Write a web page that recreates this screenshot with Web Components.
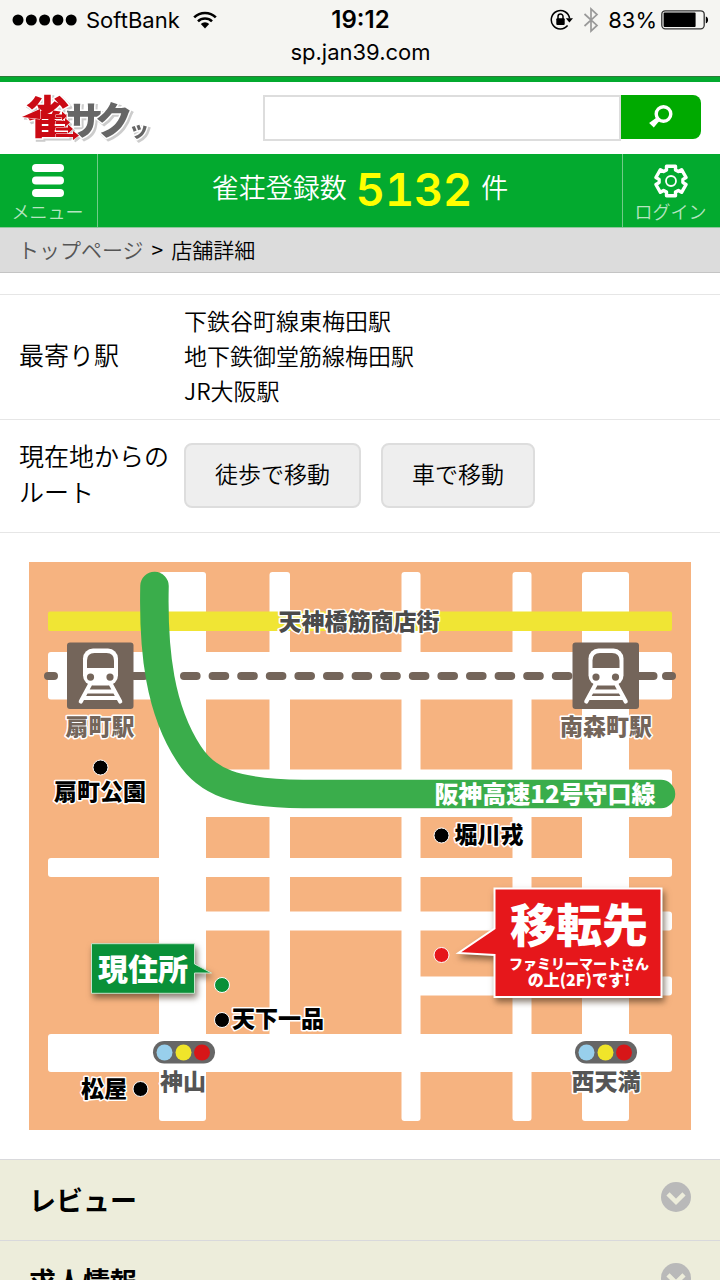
<!DOCTYPE html>
<html lang="ja">
<head>
<meta charset="utf-8">
<meta name="viewport" content="width=device-width, initial-scale=1">
<title>雀サクッ | 店舗詳細</title>
<style>
  body {
    margin: 0;
    background: #fff;
    color: #000;
    font-family: "Noto Sans CJK JP", sans-serif;
    font-weight: 350;
  }
</style>
</head>
<body>
<jan-app>
  <status-bar slot="top" carrier="SoftBank" time="19:12" battery="83" url="sp.jan39.com"></status-bar>
  <site-header></site-header>
  <site-nav count="5132"></site-nav>
  <bread-crumb>
    <a slot="parent" href="#top">トップページ</a>
    店舗詳細
  </bread-crumb>
  <store-details></store-details>
  <access-map></access-map>
  <accordion-item>レビュー</accordion-item>
  <accordion-item>求人情報</accordion-item>
</jan-app>

<script>
/**
 * Base class: renders the markup of a component into an open shadow root.
 */
class BaseElement extends HTMLElement {
  constructor () {
    super();
    this.attachShadow({ mode: 'open' });
  }

  connectedCallback () {
    this.shadowRoot.innerHTML = this.getStyles() + this.getMarkup();
  }
}

/**
 * Page shell: a fixed top slot and a scrolling body.
 */
class JanApp extends BaseElement {
  getMarkup () {
    return `
      <slot name="top"></slot>
      <main><slot></slot></main>
    `;
  }

  getStyles () {
    return `
      <style>
        :host {
          display: flex;
          flex-direction: column;
          height: 100vh;
        }

        main {
          flex: 1;
          min-height: 0;
          overflow-y: auto;
          scrollbar-width: none;
        }
      </style>
    `;
  }
}

/**
 * Phone status bar with the page address below it.
 */
class StatusBar extends BaseElement {
  getMarkup () {
    const battery = Number(this.getAttribute('battery'));

    return `
      <div class="row">
        <div class="side">
          <svg width="65" height="12" viewBox="0 0 65 12" aria-hidden="true">
            <circle cx="6" cy="6" r="5.5"/><circle cx="19.3" cy="6" r="5.5"/>
            <circle cx="32.6" cy="6" r="5.5"/><circle cx="45.9" cy="6" r="5.5"/>
            <circle cx="59.2" cy="6" r="5.5"/>
          </svg>
          <span>${this.getAttribute('carrier')}</span>
          <svg class="wifi" width="24" height="18" viewBox="0 0 24 18" aria-hidden="true">
            <g fill="none" stroke="#000" stroke-width="2.6">
              <path d="M1.2 6.4a15.4 15.4 0 0 1 21.6 0"/>
              <path d="M5 10.4a10 10 0 0 1 14 0"/>
            </g>
            <path d="M12 17.4 7.8 13a6 6 0 0 1 8.4 0z"/>
          </svg>
        </div>
        <time>${this.getAttribute('time')}</time>
        <div class="side right">
          <svg width="24" height="22" viewBox="0 0 24 22" aria-hidden="true">
            <path d="M17.6 16.6A9.2 9.2 0 1 1 19.6 9.4" fill="none" stroke="#000" stroke-width="1.5"/>
            <path d="M15.8 9.3h7.2l-3.6 4.2z"/>
            <rect x="6.3" y="9.2" width="8.4" height="6.8" rx="1"/>
            <path d="M8 10V7.6a2.5 2.5 0 0 1 5 0V10" fill="none" stroke="#000" stroke-width="1.5"/>
          </svg>
          <svg width="16" height="26" viewBox="0 0 16 26" aria-hidden="true">
            <path d="M1.5 7 14 18.4 8 24V2l6 5.6L1.5 19" fill="none" stroke="#999" stroke-width="1.7"/>
          </svg>
          <span class="level">${battery}%
            <svg width="48" height="20" viewBox="0 0 48 20" aria-hidden="true">
              <rect x="0.8" y="0.8" width="42.4" height="18" rx="3.5" fill="none" stroke="#333" stroke-width="1.3"/>
              <rect x="2.6" y="2.6" width="${Math.round(battery * 0.39)}" height="14.4" rx="1"/>
              <path d="M44.8 6.4c3 .5 3 6.3 0 6.8z"/>
            </svg>
          </span>
        </div>
      </div>
      <div class="url">${this.getAttribute('url')}</div>
    `;
  }

  getStyles () {
    return `
      <style>
        :host {
          display: block;
          padding: 4px 11px 8px 12px;
          background: #f5f5f2;
          border-bottom: 1px solid #2c7a38;
          color: #000;
          font: 400 22px/32px Inter, sans-serif;
        }

        .row {
          display: grid;
          grid-template-columns: 1fr auto 1fr;
          align-items: center;
        }

        .side {
          display: flex;
          align-items: center;
          gap: 9px;
        }

        .wifi {
          margin-left: 4px;
        }

        .right {
          justify-content: flex-end;
        }

        .level {
          display: flex;
          align-items: center;
          gap: 4px;
        }

        time {
          font-size: 24px;
          font-weight: 600;
        }

        .url {
          text-align: center;
        }
      </style>
    `;
  }
}

/**
 * Logo and search form.
 */
class SiteHeader extends BaseElement {
  getMarkup () {
    return `
      <a href="#top" aria-label="雀サクッ">
        <svg width="132" height="56" viewBox="0 0 132 56">
          <g class="word">
            <g class="grey">
              <text x="43" y="43" font-size="38">サ</text>
              <text x="73" y="43" font-size="38">ク</text>
              <text x="107" y="46" font-size="20">ッ</text>
            </g>
            <g class="red">
              <text x="3" y="43" font-size="45">雀</text>
              <path d="M0 26 18 18v10z"/>
              <path d="M34 23.500h6v-3l5 4.500-5 4.500v-3h-6zM34 30h9v-3l5 4.500-5 4.500v-3h-9zM34 36.500h12v-3l5 4.500-5 4.500v-3H34zM34 43h17v-3l6 4.500-6 4.500v-3H34z"/>
            </g>
          </g>
        </svg>
      </a>
      <form>
        <input type="search" aria-label="検索">
        <button type="button" aria-label="検索する">
          <svg width="26" height="26" viewBox="0 0 26 26">
            <circle cx="15.5" cy="10" r="7.3" fill="none" stroke="#fff" stroke-width="3.4"/>
            <path d="M9.8 12.6 13 15.9l-3 2.5-4.2 5.1-4.7-4.6L6.6 15z" fill="#fff"/>
          </svg>
        </button>
      </form>
    `;
  }

  getStyles () {
    return `
      <style>
        :host {
          display: flex;
          justify-content: space-between;
          gap: 109px;
          padding: 9px 19px 13px 22px;
          border-top: 5px solid #03aa2f;
          background: #fff;
        }

        a {
          display: block;
          height: 46px;
        }

        a svg {
          overflow: visible;
        }

        .word {
          font-weight: 900;
          filter: drop-shadow(2px 2px 0 #ccc);
        }

        .word text {
          stroke: #fff;
          stroke-width: 3px;
          paint-order: stroke;
        }

        .word path {
          stroke: #fff;
          stroke-width: 1px;
          paint-order: stroke;
        }

        .grey {
          fill: #666;
        }

        .red {
          fill: #cb0a14;
        }

        form {
          display: flex;
          flex: 1;
          align-items: flex-start;
          margin-top: 4px;
        }

        input {
          flex: 1;
          min-width: 0;
          height: 46px;
          box-sizing: border-box;
          padding: 0 10px;
          border: 2px solid #ddd;
          border-radius: 0;
          background: #fff;
          font: inherit;
          font-size: 23px;
        }

        button {
          display: grid;
          place-items: center;
          width: 80px;
          height: 44px;
          padding: 0;
          border: 0;
          border-radius: 0 8px 8px 0;
          background: #00aa00;
        }
      </style>
    `;
  }
}

/**
 * Green bar: menu button, number of registered parlours, login button.
 */
class SiteNav extends BaseElement {
  getMarkup () {
    return `
      <button type="button">
        <svg width="32" height="36" viewBox="0 0 32 36" fill="#fff">
          <rect width="32" height="8" y="1" rx="4"/>
          <rect width="32" height="8" y="13.5" rx="4"/>
          <rect width="32" height="8" y="26" rx="4"/>
        </svg>
        メニュー
      </button>
      <p>雀荘登録数 <strong>${this.getAttribute('count')}</strong> 件</p>
      <button type="button">
        <svg width="36" height="36" viewBox="0 0 36 36" fill="none" stroke="#fff">
          <path stroke-width="3.4" stroke-linejoin="round" d="M13.5 6.900V3.200h9v3.700l2.900 1.600 3.200-1.800 4.500 7.800-3.200 1.900v3.200l3.200 1.900-4.500 7.800-3.200-1.800-2.900 1.600v3.700h-9v-3.700l-2.900-1.600-3.200 1.800-4.500-7.800 3.200-1.900v-3.200l-3.200-1.900 4.500-7.800 3.200 1.800z"/>
          <circle cx="18" cy="18" r="5" stroke-width="1.8"/>
        </svg>
        ログイン
      </button>
    `;
  }

  getStyles () {
    return `
      <style>
        :host {
          display: grid;
          grid-template-columns: 97px 1fr 97px;
          height: 73px;
          border-bottom: 1px solid #8fc79b;
          background: #03aa2f;
          color: #fff;
        }

        button {
          display: flex;
          flex-direction: column;
          align-items: center;
          justify-content: space-between;
          padding: 9px 2px 6px 0;
          border: 0;
          background: none;
          color: #b5e5c0;
          font: inherit;
          font-size: 18px;
          line-height: 20px;
        }

        p {
          display: flex;
          align-items: center;
          justify-content: center;
          gap: 9px;
          margin: 0;
          padding-bottom: 8px;
          border: solid #71cb88;
          border-width: 0 1px;
          font-size: 27px;
          line-height: 36px;
        }

        strong {
          padding-top: 6px;
          color: #ff0;
          font: 600 45px/45px Inter, sans-serif;
          font-variant-numeric: tabular-nums;
        }
      </style>
    `;
  }
}

/**
 * Breadcrumb trail: the "parent" slot takes the link, the default slot the current page.
 */
class BreadCrumb extends BaseElement {
  getMarkup () {
    return `
      <nav>
        <slot name="parent"></slot>
        <span class="separator">&gt;</span>
        <span><slot></slot></span>
      </nav>
    `;
  }

  getStyles () {
    return `
      <style>
        nav {
          display: flex;
          align-items: center;
          gap: 8px;
          height: 42px;
          padding: 0 18px 2px;
          border-bottom: 1px solid #c4c4c4;
          background: #dcdcdc;
          font-size: 21px;
        }

        .separator {
          font-weight: 400;
        }

        ::slotted(a) {
          color: #555;
          text-decoration: none;
        }
      </style>
    `;
  }
}

/**
 * Table with the nearest stations and the route buttons.
 */
class StoreDetails extends BaseElement {
  stations = ['下鉄谷町線東梅田駅', '地下鉄御堂筋線梅田駅', 'JR大阪駅'];

  routes = ['徒歩で移動', '車で移動'];

  getMarkup () {
    return `
      <table>
        <tr>
          <th scope="row">最寄り駅</th>
          <td>${this.stations.join('<br>')}</td>
        </tr>
        <tr>
          <th scope="row">現在地からのルート</th>
          <td>
            <div class="routes">
              ${this.routes.map((route) => `<button type="button">${route}</button>`).join('')}
            </div>
          </td>
        </tr>
      </table>
    `;
  }

  getStyles () {
    return `
      <style>
        :host {
          display: block;
          padding-top: 21px;
        }

        table {
          width: 100%;
          border-collapse: collapse;
        }

        tr {
          border: solid #e6e6e6;
          border-width: 1px 0;
        }

        th {
          width: 150px;
          padding: 0 0 6px 19px;
          font-size: 25px;
          font-weight: inherit;
          line-height: 36px;
          text-align: left;
        }

        td {
          padding: 8px 20px 11px 15px;
          font-size: 23px;
          line-height: 35px;
        }

        .routes {
          display: flex;
          gap: 20px;
          padding: 15px 0 13px;
        }

        button {
          height: 65px;
          padding: 0 29px 4px;
          border: 2px solid #ddd;
          border-radius: 8px;
          background: #eee;
          color: inherit;
          font: inherit;
        }
      </style>
    `;
  }
}

/**
 * Illustrated map around the parlour.
 */
class AccessMap extends BaseElement {
  station (x, y) {
    return `
      <g transform="translate(${x} ${y})">
        <rect width="66.5" height="66.5" rx="3" fill="#74655a"/>
        <rect x="16" y="6" width="35" height="37" rx="10" fill="#fff"/>
        <path d="M20 25.500V18q0-7.500 7.500-7.500h12Q47 10.500 47 18v7.500z" fill="#74655a"/>
        <circle cx="23.5" cy="34.6" r="3.6" fill="#74655a"/>
        <circle cx="43" cy="34.6" r="3.6" fill="#74655a"/>
        <path d="M23 42 13.800 59M44 42l9.200 17M20 49h27M17 55.500h33" stroke="#fff" stroke-width="4.2" stroke-linecap="round"/>
      </g>
    `;
  }

  signal (x, y) {
    return `
      <g transform="translate(${x} ${y})">
        <rect width="62" height="22.5" rx="11.2" fill="#666"/>
        <circle cx="11.5" cy="11.5" r="8" fill="#98cfec"/>
        <circle cx="30.5" cy="11.5" r="8" fill="#f0e52a"/>
        <circle cx="49" cy="11.5" r="8" fill="#d71618"/>
      </g>
    `;
  }

  getMarkup () {
    return `
      <svg viewBox="0 0 662 568" role="img" aria-label="地図">
        <rect width="662" height="568" fill="#f6b380"/>
        <g fill="#fff">
          <rect x="130" y="10" width="47" height="549" rx="3"/>
          <rect x="240.5" y="10" width="20.5" height="480" rx="3"/>
          <rect x="372.5" y="10" width="19" height="549" rx="3"/>
          <rect x="483.5" y="10" width="19" height="549" rx="3"/>
          <rect x="553" y="10" width="47" height="549" rx="3"/>
          <rect x="19" y="90" width="624" height="47.5" rx="3"/>
          <rect x="130" y="207.5" width="513" height="47.5" rx="3"/>
          <rect x="19" y="296" width="624" height="19" rx="3"/>
          <rect x="160" y="349.5" width="483" height="19" rx="3"/>
          <rect x="380" y="414.5" width="263" height="19" rx="3"/>
          <rect x="19" y="472" width="624" height="38" rx="3"/>
        </g>
        <rect x="19" y="49.5" width="624" height="19.5" rx="2" fill="#f0e534"/>

        <g stroke="#74655a" stroke-width="8" stroke-linecap="round">
          <path d="M19 114h6M105 114h10M609 114h15.500M637 114h6"/>
          <path d="M155 114h392" stroke-dasharray="12.6 16"/>
        </g>
        <path d="M125.500 24C124 90 131 148 160 192c18 28 45 39 114 40h358" fill="none" stroke="#3aad4b" stroke-width="28.5" stroke-linecap="round"/>
        ${this.station(38, 80.5)}
        ${this.station(543.5, 80.5)}
        ${this.signal(124, 479)}
        ${this.signal(546, 479)}

        <g class="dot">
          <circle cx="71.5" cy="205.5" r="7.5"/>
          <circle cx="412.5" cy="273.5" r="7.5"/>
          <circle cx="193" cy="458" r="7.5"/>
          <circle cx="111.5" cy="527" r="7.5"/>
          <circle cx="193" cy="423" r="7.5" fill="#0a9038"/>
          <circle cx="412.5" cy="393" r="7.5" fill="#e6171b"/>
        </g>

        <g class="label">
          <text x="330" y="68" fill="#4a4a4a">天神橋筋商店街</text>
          <text x="71" y="173" fill="#74655a">扇町駅</text>
          <text x="577" y="173" fill="#74655a">南森町駅</text>
          <text x="71" y="238">扇町公園</text>
          <text x="460" y="281">堀川戎</text>
          <text x="249" y="465">天下一品</text>
          <text x="75" y="535">松屋</text>
          <text x="154" y="528" fill="#555">神山</text>
          <text x="577" y="528" fill="#555">西天満</text>
        </g>
        <text class="sign" x="516" y="241" font-size="24">阪神高速12号守口線</text>

        <path class="balloon" d="M62.500 381.700h103V402l17 9h-17v20.300h-103z" fill="#0a9038" stroke="#c5e5cd"/>
        <text class="sign" x="114" y="418" font-size="30">現住所</text>

        <path class="balloon" d="M465.500 326.500h167V435h-167v-42l-36-2 36-24.500z" fill="#e6171b" stroke="#fff" stroke-width="2"/>
        <text class="sign" x="550" y="380" font-size="46">移転先</text>
        <text class="sign" x="550" y="407" font-size="14">ファミリーマートさん</text>
        <text class="sign" x="550" y="424" font-size="16">の上(2F)です!</text>
      </svg>
    `;
  }

  getStyles () {
    return `
      <style>
        :host {
          display: block;
          padding: 29px;
        }

        svg {
          display: block;
          width: 100%;
        }

        .label,
        .sign {
          font-weight: 900;
          text-anchor: middle;
        }

        .label text {
          font-size: 23px;
          stroke: #fff;
          stroke-width: 3px;
          stroke-linejoin: round;
          paint-order: stroke;
        }

        .sign {
          fill: #fff;
        }

        .dot {
          stroke: #fff;
          stroke-width: 1px;
        }

        .balloon {
          filter: drop-shadow(2px 4px 3px rgba(60, 40, 20, 0.6));
        }
      </style>
    `;
  }
}

/**
 * Collapsed section heading.
 */
class AccordionItem extends BaseElement {
  getMarkup () {
    return `
      <h2>
        <button type="button" aria-expanded="false">
          <slot></slot>
          <svg width="30" height="30" viewBox="0 0 30 30" aria-hidden="true">
            <circle cx="15" cy="15" r="15" fill="#b9b9b9"/>
            <path d="m7 11.800 8 8 8-8" fill="none" stroke="#ededdb" stroke-width="4.5"/>
          </svg>
        </button>
      </h2>
    `;
  }

  getStyles () {
    return `
      <style>
        :host {
          display: block;
          border-top: 1px solid #d9d9dc;
          background: #ededdb;
        }

        h2 {
          margin: 0;
        }

        button {
          display: flex;
          align-items: center;
          justify-content: space-between;
          width: 100%;
          height: 80px;
          padding: 0 29px 2px;
          border: 0;
          background: none;
          color: #000;
          font: inherit;
          font-size: 27px;
          font-weight: 700;
        }

        svg {
          margin-bottom: 4px;
        }
      </style>
    `;
  }
}

customElements.define('jan-app', JanApp);
customElements.define('status-bar', StatusBar);
customElements.define('site-header', SiteHeader);
customElements.define('site-nav', SiteNav);
customElements.define('bread-crumb', BreadCrumb);
customElements.define('store-details', StoreDetails);
customElements.define('access-map', AccessMap);
customElements.define('accordion-item', AccordionItem);
</script>
</body>
</html>
